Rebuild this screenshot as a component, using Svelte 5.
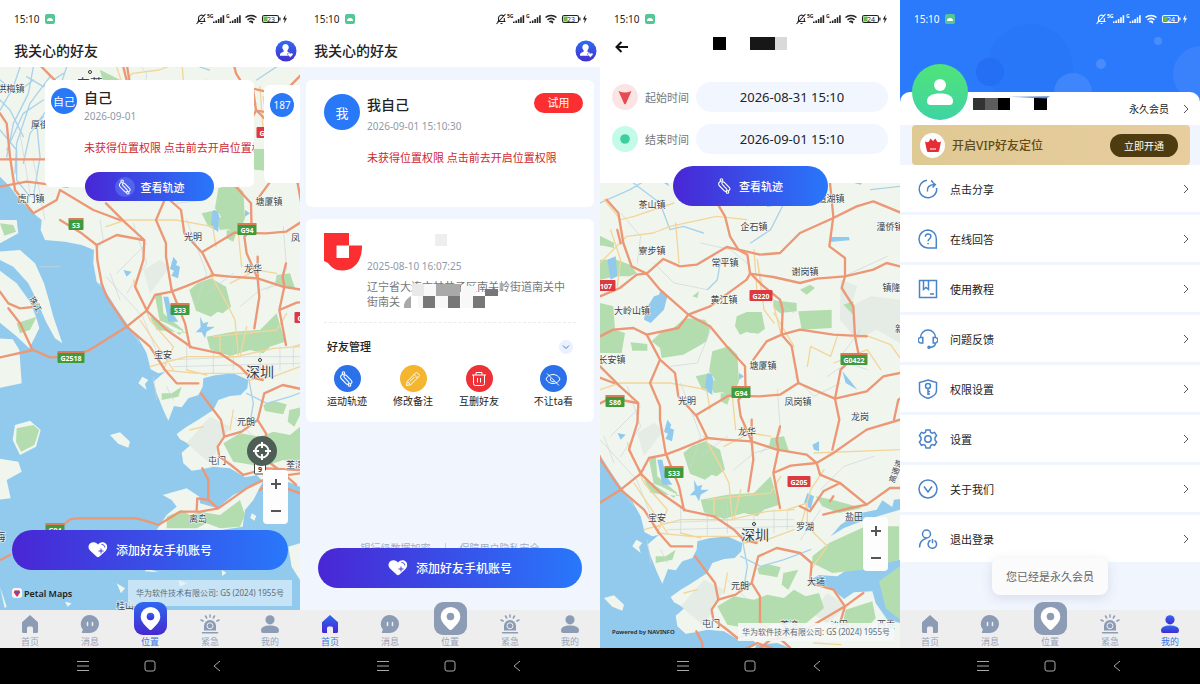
<script lang="ts">
  type Label = { t: string; x: number; y: number; size?: number; rotate?: number };
  type Badge = { t: string; x: number; y: number; kind: string };

  const notice = "未获得位置权限 点击前去开启位置权限";

  let startTime = $state("2026-08-31 15:10");
  let endTime = $state("2026-09-01 15:10");

  const tabs = [
    { id: "home", name: "首页" },
    { id: "chat", name: "消息" },
    { id: "pin", name: "位置" },
    { id: "alarm", name: "紧急" },
    { id: "me", name: "我的" },
  ];

  const menu = [
    { id: "share", name: "点击分享" },
    { id: "ask", name: "在线回答" },
    { id: "book", name: "使用教程" },
    { id: "headset", name: "问题反馈" },
    { id: "shield", name: "权限设置" },
    { id: "gear", name: "设置" },
    { id: "about", name: "关于我们" },
    { id: "logout", name: "退出登录" },
  ];

  const actions = [
    { id: "route", name: "运动轨迹" },
    { id: "pencil", name: "修改备注" },
    { id: "trash", name: "互删好友" },
    { id: "hide", name: "不让ta看" },
  ];

  const coastLabels: Label[] = [
    { t: "东莞", x: 90, y: 83, size: 13 },
    { t: "洪梅镇", x: 11, y: 88 },
    { t: "厚街", x: 40, y: 124 },
    { t: "虎门镇", x: 31, y: 198 },
    { t: "塘厦镇", x: 269, y: 201 },
    { t: "光明", x: 193, y: 236 },
    { t: "凤岗", x: 300, y: 237 },
    { t: "龙华", x: 253, y: 268 },
    { t: "珠江", x: 36, y: 304, size: 8, rotate: 60 },
    { t: "宝安", x: 163, y: 354 },
    { t: "深圳", x: 260, y: 371, size: 14 },
    { t: "元朗", x: 246, y: 421 },
    { t: "屯门", x: 217, y: 460 },
    { t: "荃湾", x: 295, y: 464 },
    { t: "离岛", x: 198, y: 518 },
    { t: "海", x: 0, y: 536, size: 11 },
    { t: "桂山", x: 125, y: 605 },
  ];

  const coastBadges: Badge[] = [
    { t: "G2", x: 264, y: 132, kind: "red" },
    { t: "S3", x: 76, y: 224, kind: "green" },
    { t: "G94", x: 247, y: 229, kind: "green" },
    { t: "S33", x: 180, y: 309, kind: "green" },
    { t: "G4", x: 302, y: 317, kind: "red" },
    { t: "G2518", x: 71, y: 357, kind: "green" },
    { t: "9", x: 260, y: 468, kind: "plain" },
    { t: "G94", x: 55, y: 529, kind: "green" },
  ];

  const inlandLabels: Label[] = [
    { t: "茶山镇", x: 52, y: 204 },
    { t: "道湖镇", x: 231, y: 198 },
    { t: "企石镇", x: 154, y: 226 },
    { t: "潼侨镇", x: 290, y: 226 },
    { t: "寮步镇", x: 52, y: 250 },
    { t: "常平镇", x: 125, y: 262 },
    { t: "谢岗镇", x: 205, y: 271 },
    { t: "镇隆镇", x: 296, y: 287 },
    { t: "黄江镇", x: 124, y: 299 },
    { t: "大岭山镇", x: 32, y: 310 },
    { t: "新圩", x: 304, y: 328 },
    { t: "长安镇", x: 12, y: 359 },
    { t: "塘厦镇", x: 163, y: 365 },
    { t: "光明", x: 87, y: 400 },
    { t: "凤岗镇", x: 198, y: 401 },
    { t: "龙岗", x: 260, y: 416 },
    { t: "龙华", x: 147, y: 431 },
    { t: "高通道", x: 295, y: 471, size: 8, rotate: -70 },
    { t: "宝安", x: 57, y: 517 },
    { t: "盐田", x: 254, y: 516 },
    { t: "罗湖", x: 205, y: 526 },
    { t: "深圳", x: 155, y: 534, size: 14 },
    { t: "大埔", x: 216, y: 581 },
    { t: "元朗", x: 140, y: 585 },
    { t: "屯门", x: 111, y: 623 },
    { t: "荃湾", x: 189, y: 624 },
    { t: "沙田", x: 239, y: 624 },
    { t: "西贡", x: 286, y: 624 },
  ];

  const inlandBadges: Badge[] = [
    { t: "107", x: 6, y: 285, kind: "red" },
    { t: "G220", x: 161, y: 295, kind: "red" },
    { t: "G0422", x: 254, y: 359, kind: "green" },
    { t: "G94", x: 141, y: 392, kind: "green" },
    { t: "S86", x: 15, y: 401, kind: "green" },
    { t: "S33", x: 74, y: 472, kind: "green" },
    { t: "G205", x: 199, y: 481, kind: "red" },
  ];
</script>

{#snippet statusBar(level: string)}
  <div class="status">
    <span class="clock">15:10</span>
    <svg class="app-dot" viewBox="0 0 10 10" width="10" height="10" aria-hidden="true">
      <rect width="10" height="10" rx="2" fill="#55c795" />
      <path d="M2 7a3 3 0 0 1 6 0z" fill="#fff" />
    </svg>
    <svg class="signals" viewBox="0 0 94 12" width="94" height="12" aria-hidden="true">
      <g fill="none" stroke="currentColor" stroke-width="1.1">
        <path d="M2.5 8.5h8M3.5 8.5V5a3 3 0 0 1 5.5-1.5M9.3 5v3.5M5.5 10.5h2M1.5 11L10.500 1" />
        <path d="M50.5 4.5a8.5 8.5 0 0 1 11 0M52.5 6.8a5.5 5.5 0 0 1 7 0M54.3 9a3 3 0 0 1 3.5 0" stroke-width="1.5" />
        <rect x="67.5" y="2.500" width="16" height="7" rx="1.8" />
      </g>
      <g fill="currentColor">
        <path d="M18 8.5h1.600v1.5H18zM20.400 7.5H22V10h-1.600zM22.800 6h1.600v4h-1.600zM25.200 4.200h1.600V10h-1.600zM27.600 2.200h1.600V10h-1.600z" />
        <path d="M34.500 8.500h1.600v1.500h-1.600zM36.900 7.500h1.600V10h-1.600zM39.300 6h1.600v4h-1.600zM41.700 4.200h1.600V10h-1.600zM44.100 2.200h1.600V10h-1.600z" />
        <path d="M56 9l1.300 1.800L58.600 9zM84.300 4.500h1.200v3h-1.200zM90.600 1.500L87.800 6.500h1.900l-.7 4 3-5.200h-1.900z" />
        <text x="12" y="4.500" font-size="5" font-weight="700">5G</text>
        <text x="31" y="4.500" font-size="5" font-weight="700">G</text>
      </g>
      <rect x="68.500" y="3.500" width="4" height="5" fill="#68bb49" />
      <text x="76" y="8.600" font-size="7" text-anchor="middle" fill="currentColor">{level}</text>
    </svg>
  </div>
{/snippet}

{#snippet titleBar()}
  <header class="title-bar">
    <h1>我关心的好友</h1>
    <button class="friend" aria-label="好友">
      <svg viewBox="0 0 22 22" width="22" height="22" aria-hidden="true">
        <circle cx="11" cy="11" r="10.5" fill="url(#badge-fill)" />
        <path d="M10.500 4a3.400 3.400 0 0 1 2.400 5.700c-.9.900-.7 1.900.3 2.300 1.600.6 2.800 1.100 2.900 2.600v1.200H5v-1.200c.1-1.500 1.300-2 2.900-2.600 1-.4 1.200-1.400.3-2.300A3.400 3.400 0 0 1 10.500 4z" fill="#fff" />
        <path d="M15.300 17.500l-2.600-2.600c-.9-1.500 1.300-2.900 2.600-1.300 1.300-1.600 3.500-.2 2.600 1.300z" fill="#fff" stroke="#3a45d8" stroke-width=".6" />
      </svg>
    </button>
  </header>
{/snippet}

{#snippet trackGlyph()}
  <g fill="none" stroke="currentColor" stroke-width="1.1" stroke-linecap="round">
    <circle cx="4.500" cy="2" r="1.300" />
    <circle cx="10.500" cy="14" r="1.300" />
    <path d="M3.600 3.200C1.200 4.800 1 6.400 2.600 8l4.700 4.800c1.500 1.500 3.700-.4 2.200-2L5.300 6.300c-1.300-1.500.5-3.300 2-1.900l4.900 5c1.300 1.400.9 2.500-.8 3.500" />
  </g>
{/snippet}

{#snippet tabIcon(id: string, fill: string)}
  {#if id === "home"}
    <svg viewBox="0 0 20 20" width="20" height="20"><path d="M10 1l8 7.300v9.200q0 1.500-1.500 1.500H13v-4.800q0-1.700-1.500-1.700h-3Q7 12.500 7 14.200V19H3.500Q2 19 2 17.500V8.300z" {fill} /></svg>
  {:else if id === "chat"}
    <svg viewBox="0 0 20 20" width="20" height="20">
      <path d="M10 1a9 9 0 1 1 0 18H2.500q-1 0-.6-1l1-2.300A9 9 0 0 1 10 1z" {fill} />
      <path d="M7.500 8.500v3M12.500 8.500v3" stroke="#eef0f3" stroke-width="1.500" stroke-linecap="round" />
    </svg>
  {:else if id === "pin"}
    <svg viewBox="0 0 33 33" width="33" height="33">
      <rect width="33" height="33" rx="9" {fill} />
      <path d="M16.500 5a9.800 9.800 0 0 1 9.800 9.800c0 5-5 9.500-8.500 12.700q-1.300 1.200-2.600 0C11.700 24.300 6.700 19.800 6.700 14.800A9.800 9.800 0 0 1 16.500 5z" fill="#fff" />
      <circle cx="16.500" cy="14.500" r="3.800" {fill} />
    </svg>
  {:else if id === "alarm"}
    <svg viewBox="0 0 20 20" width="20" height="20">
      <path d="M4 16.500V12a6 6 0 0 1 12 0v4.500z" {fill} />
      <circle cx="10" cy="11.800" r="3" fill="none" stroke="#eee" stroke-width="1" />
      <path d="M2.500 18.700h15M10 1v2M5.500 2l1.200 2M14.500 2l-1.200 2M1 6l2.200 1M19 6l-2.200 1" stroke={fill} stroke-width="1.500" stroke-linecap="round" />
    </svg>
  {:else}
    <svg viewBox="0 0 20 20" width="20" height="20">
      <circle cx="10" cy="5.800" r="4.600" {fill} />
      <path d="M1 16.500c0-3.200 3.500-5 9-5s9 1.800 9 5q0 2.500-2 2.500H3q-2 0-2-2.500z" {fill} />
    </svg>
  {/if}
{/snippet}

{#snippet bottomBars(active: string)}
  {#if active}
    <nav class="tabs">
      {#each tabs as tab}
        <button class="tab" class:active={tab.id === active} class:raised={tab.id === "pin"}>
          {@render tabIcon(tab.id, tab.id === active ? "url(#tab-fill)" : "#8d9cb5")}
          <span>{tab.name}</span>
        </button>
      {/each}
    </nav>
  {/if}
  <div class="system">
    <button aria-label="菜单"><svg viewBox="0 0 12 12" width="12" height="12"><path d="M0 1.500h12M0 6h12M0 10.500h12" /></svg></button>
    <button aria-label="主屏幕"><svg viewBox="0 0 12 12" width="12" height="12"><rect x="1" y="1" width="10" height="10" rx="2" /></svg></button>
    <button aria-label="返回"><svg viewBox="0 0 12 12" width="12" height="12"><path d="M9 1L3 6l6 5" /></svg></button>
  </div>
{/snippet}

{#snippet geography()}
  <!-- surveyed at three units to the pixel -->
  <g transform="scale(0.33333)">
    <rect x="-20" y="0" width="1300" height="1900" fill="#92caee" />
    <g fill="#f0f6ee">
      <path d="M-10 0H1280V1000L1200 1010 1195 1032 1165 1012 1148 1040 1090 1052 1040 1085 1010 1120 1050 1095 1110 1072 1218 1040 1218 1190 1110 1205 1075 1210 1030 1240 975 1236 950 1250 1010 1275 1050 1308 1080 1288 1135 1285 1145 1320 1180 1370 1218 1380 1280 1500 900 1500 900 1460 850 1440 790 1445 770 1425 735 1432 690 1405 640 1400 605 1408 575 1412 550 1390 545 1358 572 1335 540 1318 530 1302 560 1280 590 1262 640 1230 655 1200 690 1188 722 1185 742 1165 745 1140 700 1120 645 1126 610 1135 608 1160 595 1185 565 1195 545 1222 522 1218 505 1262 490 1230 470 1180 460 1145 495 1115 475 1120 452 1108 440 1060 415 1015 380 975 345 920 312 868 290 845 280 790 282 750 245 735 195 725 135 720 122 690 125 660 100 640 60 600 30 560-10 520z" />
      <path d="M-10 755L60 750 105 790 132 850 148 905 160 950 187 1030 165 1015 138 965 110 900 85 850 40 800-10 775zM-10 805L50 850 90 905 108 950 118 985 88 1045 45 1005-10 960zM-10 1015L38 1018 58 1050 65 1150-10 1165zM-10 660H50L55 700 0 730zM45 1275L90 1262 122 1290 108 1340 60 1365 38 1320zM-10 1375L55 1385 65 1415 20 1440 32 1495-10 1500z" />
      <path d="M488 1485L560 1465 598 1490 600 1510 652 1525 700 1485 788 1445 760 1500 735 1530 728 1580 600 1600 470 1590 500 1545 530 1520 515 1500zM330 1305l30-8 30 28-5 18-30-12zM415 1150l12-20 18 10-10 12 5 18zM440 1705l35 12-40-3zM350 1750l25 15-12 15zM865 1640l35-10v110l-25-40zM535 1740l25 10-20 10zM755 1540l14 8-6 14-12-8zM665 1710l14 8-12 10zM195 1805l20 5-12 10zM0 1760l20 60-6 4z" />
    </g>

    <g fill="#e2e9e2" opacity=".8">
      <path d="M1040 350l50 20-20 60 60-30 88 10v130l-70-40-60 30-50-60zM430 810l50-30 30 20-60 80zM560 1330l70-80 60 30-60 110zM1000 1290l60 40-60 50-50-30z" />
    </g>
    <g fill="#b3ddae">
      <path d="M318 290l50 0 40 15 20 25-20 10-40 0-50 10zM318 420l40 10 5 70 30 10-10 60-65 0zM300 210l60 30-50 10zM498 510l40-15 35-30 60 5 15 25-10 40-25 15-45 25-65 10-5-30-25-20zM655 565l50-15 25 25 5 80-20 50-35-20-20-40-15-20zM728 460l30-13 45 0 10 50-20 15-35-5-20 8-15-25zM913 445l100-5 0 55-90 5zM838 412l70 8 0 25-50 5-20-15zM918 380l30-15 15 10-25 20zM1048 425l30-10 0 40zM605 640l45-10 0 60-25-10zM410 538l50 5 0 20-45 0zM765 480l40-20zM595 400l20-15-5 20z" />
      <path d="M568 870l25-20 40-15 45 25 15 60-25 20-15-5-20 15-45-18zM620 1010l80-15 80-5 50-50 25 85-45 15-20 20-40-10-60 18-60-20zM465 890l20-10 5 60 60 50-10 15-60-40zM830 825l40-5 15 45-60-10zM965 1000l50 10 90 25-70 15-50-20zM955 1180l50-40 110-50 100 0 0 100-110 30-90 10-60-30zM670 1330l50-30 60 10 40-15 50 10 30-25 35 20 40-10 15 45-70 60-70-15-60 20-90-15zM790 1215l30-12 40 10-10 30-55-10zM868 1230l45-10-30 60-20-15zM1055 1340l80-25 10 50-40 45-60-20zM1155 1255l70-50 0 170-50-40zM560 1000l-60-30-50-20 20 40zM485 1180l30 0 30-20-10 30-50 10z" />
      <path d="M500 1550l45-20 25 15 30-10 60 10 60-45 15 45-15 35-60 5-40-15-30 15-90 0zM50 1285l50-10 18 15-15 45-40 20-15-30zM0 670l40 5 8 20-35 12zM50 970l60-20-20 40-30 10zM680 690l30 5-10 30-20-10zM640 650l60 5 10 30-50 5zM765 480l25-10 0 40-25 0zM300 210l60 30 0 15-45-10z" />
    </g>
    <g fill="#92caee">
      <path d="M480 400l15-5 5-15 20 20-10 40-40 40-20-10 5-30zM340 290l25-10 5 60-20 10zM638 635l20 10-5 50-20-20zM1010 222l55 0 2 10-60 5zM520 770l12 15-4 10 12 5-6 35-20-8 8-15-12-5zM600 950l10 20 15-5-5 15 25 0-25 15-5 20-10-18-18 0 15-15zM490 890l15 0 10 45 20 30-30 0zM940 990l20 10-10 40-20-20zM1080 60l40-25-20 30zM955 845l20-10 0 30-15-5zM735 630l15 10-15 10zM640 630l15 5 0 60-18-10zM370 810l25 5-15 15zM515 40l10 30-15-10zM1045 625l25 30 20 25-35-20z" />
    </g>

    <g class="river">
      <path d="M100 201l-15 80-45 90-20 100M200 201l-30 90-60 80 10 100-20 120M60 201l-20 60-40 70M150 230l-60 80-40 120-5 90M0 240l50 40 50-40M0 300l30 30 40 80M80 230l50 30 60-40M0 390l50 60 0 90 40 50M130 300l-60 40-50 110M318 120l90-40 50-30 100 5M418 60l80 60 30 80 40-10 60 20M820 130l60-10 50-60M870 120l-40 80-60 40M680 290l-10 60-30 30M130 350l-40 50-20 90M740 1180l60 30 70-20 80-30M745 1130l15 80-10 60M1130 80l90-10M300 850l50 80 70 100" />
    </g>
    <g class="lane">
      <path d="M380 150l60 70-10 80M480 300l60 60 100 20M620 240l90 20 60 50M650 500l-40 100-80 10M790 290l20 100 90 60M1050 340l130-60M700 100l60 30M900 640l60 60 80-40M400 670l40 120-60 90M560 660l60 160-30 90M700 820l-80 60M850 680l10 130-60 60M318 830l110 120 40 100M500 1080l240-10 160 0M520 1100l380-10M560 1030v80M640 1040v80M700 1030v80M780 1050v70M840 1040v70M880 1040v60M120 800l60 0M300 660l10 60-20 30M330 820l30 80M440 730l-90 90M720 920l60-50 70-20M100 480l35 180M60 400l30 180M980 980l70-70 90-30M1000 640l60-40 60 20M1100 500l-60 80M980 1040l-60 90M460 1130l10 70M500 1160l20 40M700 1250l60 60" />
    </g>
    <g class="street">
      <path d="M350 201l30 90-10 80M318 300l80-80 80-10 50-20 140-30 90 10M545 180l10 120M330 110l50 60 40-10 120-40M790 290l20 150 30 40M840 430l20 80M318 680l60-20 150 0 110 20 10 60M630 820l50 90 25 50 10 110M450 1100l110-30 150 0 110-25 80-5M520 1040l-30 70 100 10 150 0 60-20M400 840l50 120 70 80M640 1010l190-20 30-50M720 1070l20-90M660 1070v-60M920 1090l30-110 40-60M950 1100l50 50-50 70M960 870l260-10M560 1110l60 15M700 1230l-10 60M1020 600l100-40 40 60M880 1040l60-20 0 60M900 1100l-80 30-70 10M420 960l100 150M690 850l80-40 60 10M715 700l10 100M1110 515l80 30 28 40" />
      <path d="M780 260l10 140M840 450l60 100M940 610l10-60 60 30 20-60M960 1440l80 5M570 1290l40-10" />
    </g>

    <g class="highway">
      <path d="M338 110L373 150 388 240 413 310 458 332 498 380 583 455 648 490 698 550 753 610 755 690 733 710 740 760 773 835" />
      <path d="M318 400L378 375 428 335 458 332 508 288 558 310 608 305 698 252 733 260M125 201l40 40M370 201l10 40" />
      <path d="M663 110L693 160 708 220 733 260 760 275 768 330 803 365 858 410 866 440 863 515 893 550 913 660 958 680 1023 707 1036 770 1015 860" />
      <path d="M733 260L798 275 858 270 918 210 1018 165 1088 130 1138 115 1218 148M1008 60L1018 160 1006 250 1053 285 1053 340 1043 375 1078 430 1083 520 1093 570 1040 620 1023 707" />
      <path d="M768 332L838 342 918 360 968 347 1053 340 1138 320 1178 300 1218 310M583 455L648 430 758 350 768 332M0 560L80 545 200 560 318 520 358 500 418 495 458 515 553 495 583 455" />
      <path d="M458 515L498 590 468 660 498 730 498 770 515 870M498 590L543 630 553 700 608 760 640 825M778 590L818 535 863 515 918 500 1018 515 1118 520M318 610L378 670 433 720 430 780 405 860 440 930" />
      <path d="M608 755L703 698 798 700 858 695 913 660M1023 707L1118 685 1168 640 1218 630M1200 770L1213 710 1230 700" />
      <path d="M440 932L380 980 265 1052 210 1070 150 1072 100 1050 0 1072M440 932L465 885 515 875 555 860 640 825 690 830 773 835 848 860 938 875 968 900" />
      <path d="M515 870L555 970 570 1042M290 735L292 780 305 850 320 890 380 980 450 1040 495 1110 530 1150 595 1150M440 932L500 990 575 1042 660 1060 720 1100 748 1130 788 1140" />
      <path d="M773 770L773 835 778 890 763 985M858 790L848 830 853 860 838 930 858 1035M838 930L890 908 968 900 1018 870 1118 800 1218 770" />
      <path d="M968 900L978 935 1038 960 1118 1025 1188 975 1218 975M1038 960L988 985 948 1045 918 1030M988 1055L1068 1035 1118 1025M603 1180L663 1260 673 1310 653 1340 658 1370 693 1395 730 1425 800 1405 900 1410" />
      <path d="M673 1310L725 1295 773 1260 793 1180 848 1155 918 1170 953 1200 948 1260 1018 1280 1053 1330 968 1380 900 1420 830 1430 780 1470M773 1260L798 1300 798 1380 838 1410 888 1454M1108 1290L1053 1330 1038 1380" />
      <path d="M190 1575L210 1558 230 1555 410 1555 445 1565 475 1575 540 1535 600 1535 655 1525 740 1465 790 1440 900 1480M607 1405L625 1440 625 1500 655 1525M590 1530L592 1495 625 1500M0 1680L30 1665" />
      <path d="M180 660L245 700 290 735 350 705 430 720M0 340L20 370 30 470 45 570 100 640 170 600 180 570 280 630 360 660M0 478H150M0 875L25 910 60 925 110 920M25 925L60 970 95 1045M1018 1000l-10 15" />
    </g>
  </g>
{/snippet}

{#snippet markers(labels: Label[], badges: Badge[])}
  {#each labels as l}
    <text class="place" x={l.x} y={l.y} font-size={l.size ?? 9} transform={l.rotate ? `rotate(${l.rotate} ${l.x} ${l.y})` : undefined}>{l.t}</text>
  {/each}
  {#each badges as b}
    {@const w = b.t.length * 4 + 7}
    <g class="shield {b.kind}">
      <rect x={b.x - w / 2} y={b.y - 5} width={w} height="11" rx="1" />
      {#if b.kind === "green"}
        <path d="M{b.x - w / 2} {b.y - 5}h{w}" stroke="#d97c57" stroke-width="2" />
      {/if}
      <text x={b.x} y={b.y + 1}>{b.t}</text>
    </g>
  {/each}
{/snippet}

{#snippet zoomControl()}
  <div class="zoom">
    <button aria-label="放大"><svg viewBox="0 0 12 12" width="12" height="12"><path d="M1 6h10M6 1v10" /></svg></button>
    <button aria-label="缩小"><svg viewBox="0 0 12 12" width="12" height="12"><path d="M1 6h10" /></svg></button>
  </div>
{/snippet}

{#snippet addFriend()}
  <button class="pill add">
    <svg viewBox="0 0 20 18" width="20" height="18" aria-hidden="true">
      <path d="M8.500 15.500L2 9.500C-1 6 .8 1.500 5 1.200 7.500 1 9 2.200 10 3.500 11 2 13 .8 15.500 1.300 19.500 2.300 20.300 7 17.500 10l-6 5.500q-1.500 1.300-3 0z" fill="#fff" />
      <path d="M13 7.500v5M10.500 10h5M13.500 3.500c2 0 3.300 1 3.300 3" fill="none" stroke="#4540dc" stroke-width="1" />
    </svg>
    添加好友手机账号
  </button>
{/snippet}

{#snippet chevron()}
  <svg class="chevron" viewBox="0 0 6 10" width="6" height="10" aria-hidden="true"><path d="M1 1l4 4-4 4" /></svg>
{/snippet}

{#snippet menuIcon(id: string)}
  <svg class="menu-icon" viewBox="0 0 20 20" width="20" height="20" aria-hidden="true">
    {#if id === "share"}
      <path d="M9 1.300A8.800 8.800 0 1 0 18.700 9M13 1.800a8 8 0 0 1 2 1M9.500 12.500c-.8-4 1.500-6.700 7-7M14 3l3.300 2.500-2.800 3" />
    {:else if id === "ask"}
      <path d="M10 1a9 9 0 1 0 0 18h8.300V10A8.600 8.600 0 0 0 10 1zM7.300 7.800c0-3.700 5.700-3.600 5.600-.2 0 2.200-2.800 2.100-2.800 4.700M10.100 14v1.200" />
    {:else if id === "book"}
      <path d="M1.500 1.500h17v17h-17zM5.500 1.500v9l2.500-2 2.500 2v-9M12 15h4" />
    {:else if id === "headset"}
      <path d="M2.500 9V8.500a7.500 7.500 0 0 1 15 0V9M2.500 8.500h2.300v5.500H3.500a2.500 2.500 0 0 1-1-5.500zM17.500 8.500h-2.300v5.500h1.300a2.500 2.500 0 0 0 1-5.500zM17.500 13.800c0 3-2.500 4.500-6 4.500" />
      <circle cx="11" cy="18.300" r="1" />
    {:else if id === "shield"}
      <path d="M10 1l8.500 2.500v8c0 4-4 6.500-8.500 8-4.500-1.500-8.500-4-8.500-8v-8zM10 9.500v6.500M10 12.500h2M10 15h2" />
      <circle cx="10" cy="7" r="2.500" />
    {:else if id === "gear"}
      <path d="M8 1h4l.7 2.400 1.600.8 2.300-.8 2 3.200-1.600 1.900v2.500l1.600 2-2 3.300-2.400-.7-1.500.8L12 19H8l-.7-2.600-1.500-.8-2.400.7-2-3.300 1.600-2V8.500L1.400 6.600l2-3.200 2.300.8 1.600-.8z" />
      <circle cx="10" cy="10" r="3.200" />
    {:else if id === "about"}
      <circle cx="10" cy="10" r="9" />
      <path d="M6 7.500l4 5.500 4-5.500" />
    {:else}
      <circle cx="8.500" cy="5" r="4" />
      <path d="M1.500 18.500c0-5 2.500-8 7-9.200M12.500 11.300a4.200 4.200 0 1 0 4 .2M14.500 10v4.200" />
    {/if}
  </svg>
{/snippet}

<svg class="defs" width="0" height="0" aria-hidden="true">
  <defs>
    <linearGradient id="tab-fill" x1="0" y1="0" x2="0" y2="1">
      <stop offset="0" stop-color="#2f68f0" />
      <stop offset="1" stop-color="#4529cf" />
    </linearGradient>
    <linearGradient id="badge-fill" x1="0" y1="0" x2="0" y2="1">
      <stop offset="0" stop-color="#2e6cf3" />
      <stop offset="1" stop-color="#4430cf" />
    </linearGradient>
  </defs>
</svg>

<main class="board">
  <section class="phone">
    {@render statusBar("23")}
    {@render titleBar()}
    <div class="map">
      <svg class="canvas" viewBox="0 67 300 543" preserveAspectRatio="xMidYMid slice" aria-hidden="true">
        {@render geography()}
        <circle class="city" cx="90" cy="72" r="1.500" />
        <circle class="city" cx="260" cy="360" r="1.500" />
        {@render markers(coastLabels, coastBadges)}
      </svg>
      <div class="carousel">
        <article class="friend-card">
          <span class="avatar small">自己</span>
          <div class="who">
            <h2>自己</h2>
            <time>2026-09-01</time>
            <p class="warn">{notice}</p>
          </div>
          <button class="pill track">
            <svg class="halo" viewBox="-3 -2 21 20" width="20" height="20" aria-hidden="true">{@render trackGlyph()}</svg>
            查看轨迹
          </button>
        </article>
        <article class="friend-card next"><span class="avatar tiny">187</span></article>
      </div>
      <div class="map-tools">
        <button class="locate" aria-label="定位">
          <svg viewBox="0 0 20 20" width="20" height="20"><circle cx="10" cy="10" r="6.500" /><path d="M10 1v6M10 13v6M1 10h6M13 10h6" /></svg>
        </button>
        {@render zoomControl()}
      </div>
      {@render addFriend()}
      <footer class="credits">
        <span class="petal">
          <svg viewBox="0 0 10 10" width="10" height="10" aria-hidden="true"><rect width="10" height="10" rx="3" fill="#f5f7fb" /><path d="M5 9L1.800 4.500Q2 1.500 5 2.500 8 1.500 8.200 4.500z" fill="#d8324c" /><circle cx="5" cy="4.500" r="1.200" fill="#3e5fd0" /></svg>
          Petal Maps
        </span>
        <small>华为软件技术有限公司: GS (2024) 1955号</small>
      </footer>
    </div>
    {@render bottomBars("pin")}
  </section>

  <section class="phone">
    {@render statusBar("23")}
    {@render titleBar()}
    <div class="feed">
      <article class="card self">
        <span class="avatar">我</span>
        <div class="who">
          <h2>我自己</h2>
          <time>2026-09-01 15:10:30</time>
          <p class="warn">{notice}</p>
        </div>
        <button class="trial">试用</button>
      </article>
      <article class="card">
        <div class="person">
          <svg viewBox="0 0 38 38" width="38" height="38" aria-hidden="true">
            <path d="M0 0h25v12.500h13C38 29 30 37.500 18 37.500 11 37.500 7 34 4 30L0 28z" fill="#fb2e31" />
            <path d="M12.500 12.500H25V25H12.500z" fill="#fff" />
          </svg>
          <div class="who">
            <span class="hidden-name"></span>
            <time>2025-08-10 16:07:25</time>
            <p class="address">
              辽宁省大连市甘井子区南关岭街道南关中街南关
              <svg class="mosaic" viewBox="0 0 100 26" width="100" height="26" aria-hidden="true">
                <path d="M10 1h24v12H10zM59 3h15v10H59zM16 13h5v12h-5zM33 13h14v12H33zM59 13h13v12H59z" fill="#f8f8f8" />
                <path d="M10 1h12v12H10z" fill="#e9e9e9" />
                <path d="M34 1h24v12H34zM2 25Q1 18 9 13v12z" fill="#a9a9a9" />
                <path d="M21 13h12v12H21zM46 13h12v12H46zM71 13h12v12H71zM83 6h13v7H83z" fill="#777" />
              </svg>
            </p>
          </div>
        </div>
        <hr />
        <div class="manage">
          <h3>好友管理</h3>
          <button class="fold" aria-label="收起"><svg viewBox="0 0 8 6" width="8" height="6"><path d="M1 1.500l3 3 3-3" /></svg></button>
        </div>
        <div class="actions">
          {#each actions as action}
            <button class="action">
              <span class="disc {action.id}">
                <svg viewBox="0 0 16 16" width="16" height="16" aria-hidden="true">
                  {#if action.id === "route"}
                    {@render trackGlyph()}
                  {:else if action.id === "pencil"}
                    <path d="M1.500 14.500l.8-4.200 8.200-8.300q1-.8 2 0l1.500 1.500q.8 1 0 2l-8.300 8.200zM9 3.500l3.500 3.500M2.500 10.500l3 3M5 10.500L9.500 6" />
                  {:else if action.id === "trash"}
                    <path d="M1 4h14M5 4V1.500h6V4M2.500 4v8.500q0 2 2 2h7q2 0 2-2V4M6.500 7v4.500M9.500 7v4.500" />
                  {:else}
                    <path d="M1 8c2.500-6 11.500-6 14 0-2.500 6-11.500 6-14 0zM2 2.500l12 12M5.500 7.500a2.600 2.600 0 0 0 4 2.800" />
                  {/if}
                </svg>
              </span>
              {action.name}
            </button>
          {/each}
        </div>
      </article>
      <p class="promise"><span>银行级数据加密</span><i></i><span>保障用户隐私安全</span></p>
      {@render addFriend()}
    </div>
    {@render bottomBars("home")}
  </section>

  <section class="phone">
    {@render statusBar("24")}
    <header class="track-head">
      <button class="back" aria-label="返回"><svg viewBox="0 0 14 12" width="14" height="12"><path d="M13 6H1.500M6.500 1l-5 5 5 5" /></svg></button>
      <svg class="masked" viewBox="0 0 74 13" width="74" height="13" aria-hidden="true">
        <path d="M0 0h13v13H0z" />
        <path d="M37 0h25v13H37z" fill="#171717" />
        <path d="M62 0h12v13H62z" fill="#d9d9d9" />
      </svg>
    </header>
    <form class="range">
      <svg viewBox="0 0 26 26" width="26" height="26" aria-hidden="true"><circle cx="13" cy="13" r="13" fill="#fde4e4" /><path d="M6.500 7q6.500 3 13 0L14 19.500q-1 1.500-2 0z" fill="#e64b50" /></svg>
      <label for="start">起始时间</label>
      <input id="start" type="text" bind:value={startTime} />
      <svg viewBox="0 0 26 26" width="26" height="26" aria-hidden="true"><circle cx="13" cy="13" r="13" fill="#c4fbe8" /><circle cx="13" cy="13" r="4.800" fill="#40cf9c" /></svg>
      <label for="end">结束时间</label>
      <input id="end" type="text" bind:value={endTime} />
    </form>
    <div class="map inland">
      <svg class="canvas" viewBox="0 183 300 465" preserveAspectRatio="xMidYMid slice" aria-hidden="true">
        <g transform="translate(-106 163)">{@render geography()}</g>
        <circle class="city" cx="154" cy="524" r="1.500" />
        {@render markers(inlandLabels, inlandBadges)}
      </svg>
      <button class="pill track wide">
        <svg viewBox="0 0 15 16" width="15" height="16" aria-hidden="true">{@render trackGlyph()}</svg>
        查看轨迹
      </button>
      <div class="map-tools">{@render zoomControl()}</div>
      <footer class="credits">
        <span class="powered">Powered by NAVINFO</span>
        <small>华为软件技术有限公司: GS (2024) 1955号</small>
      </footer>
    </div>
    {@render bottomBars("")}
  </section>

  <section class="phone profile">
    <div class="hero">
      {@render statusBar("24")}
      <svg class="bubbles" viewBox="0 0 300 104" preserveAspectRatio="xMaxYMin slice" aria-hidden="true">
        <circle cx="130" cy="67" r="43" fill="#2977f9" />
        <circle cx="90" cy="72" r="14" fill="#246ff3" />
        <circle cx="173" cy="92" r="19" fill="#3f85fb" />
        <circle cx="201" cy="64" r="5" fill="#4a8cfc" />
        <circle cx="258" cy="41" r="4" fill="#4a8cfc" />
        <circle cx="301" cy="74" r="28" fill="#3a82fb" />
      </svg>
    </div>
    <div class="sheet">
      <span class="portrait">
        <svg viewBox="0 0 56 56" width="56" height="56" aria-hidden="true"><circle cx="28" cy="21" r="6" fill="#fff" /><path d="M15 37c0-5 5-7.500 13-7.500S41 32 41 37q0 4-3.500 4h-19q-3.500 0-3.500-4z" fill="#fff" /></svg>
      </span>
      <svg class="masked" viewBox="0 0 78 15" width="78" height="15" aria-hidden="true">
        <path d="M0 2h12v12H0z" fill="#333" /><path d="M12 2h13v12H12z" fill="#5d5d5d" />
        <path d="M25 2h12v12H25zM61 2h13v12H61z" />
        <path d="M37 .8L77 .3 73 2.500z" fill="#5b86cf" />
      </svg>
      <a class="member" href="#member">永久会员 {@render chevron()}</a>
    </div>
    <div class="vip">
      <span class="crown"><svg viewBox="0 0 16 14" width="16" height="14" aria-hidden="true"><path d="M0 3.500q2.500 1.500 4 0L5.500.500 8 3l2.500-2.500L12 3.500q1.500 1.500 4 0l-1.800 9q-.3 1.500-1.500 1.500H3.300q-1.200 0-1.500-1.500z" fill="#e62d33" /><path d="M5 11h6" stroke="#fff" /></svg></span>
      <strong>开启VIP好友定位</strong>
      <button>立即开通</button>
    </div>
    <ul class="menu">
      {#each menu as item}
        <li><a href="#{item.id}">{@render menuIcon(item.id)}<span>{item.name}</span>{@render chevron()}</a></li>
      {/each}
    </ul>
    <div class="rest"><div class="toast" role="status">您已经是永久会员</div></div>
    {@render bottomBars("me")}
  </section>
</main>

<style>
  :global(body) {
    margin: 0;
    background: #fff;
    font-family: "Noto Sans", "Noto Sans CJK SC", sans-serif;
    color: #222;
  }
  h1, h2, h3, p, ul, hr {
    margin: 0;
    padding: 0;
  }
  button, input {
    font: inherit;
    color: inherit;
    border: 0;
    padding: 0;
    background: none;
  }
  button {
    cursor: pointer;
  }
  a {
    color: inherit;
    text-decoration: none;
  }
  svg {
    flex: none;
    display: block;
  }
  .defs {
    position: absolute;
  }
  .board {
    display: grid;
    grid-template-columns: repeat(4, 1fr);
    min-height: 100vh;
  }
  .phone {
    display: flex;
    flex-direction: column;
    min-width: 0;
    overflow: hidden;
  }

  /* status and title */
  .status {
    display: flex;
    align-items: center;
    height: 38px;
    padding: 0 11px 0 14px;
  }
  .clock {
    font-size: 10px;
    margin-right: 5px;
  }
  .signals {
    margin-left: auto;
  }
  .title-bar {
    display: flex;
    align-items: center;
    justify-content: space-between;
    height: 25px;
    padding: 0 3px 4px 14px;
  }
  h1 {
    font-size: 14px;
    line-height: 20px;
    font-weight: 500;
  }
  h2 {
    font-size: 14px;
    line-height: 20px;
    font-weight: 500;
  }
  time {
    display: block;
    font-size: 10px;
    line-height: 16px;
    color: #8f9aa8;
  }
  .warn {
    font-size: 11px;
    line-height: 16px;
    color: #cf2730;
    white-space: nowrap;
    overflow: hidden;
  }

  /* map */
  .map {
    position: relative;
    flex: 1;
    display: flex;
    flex-direction: column;
  }
  .canvas {
    position: absolute;
    inset: 0;
    width: 100%;
    height: 100%;
  }
  .map > :not(.canvas) {
    position: relative;
  }
  .river, .lane, .street, .highway {
    fill: none;
    stroke-linejoin: round;
    stroke-linecap: round;
  }
  .river {
    stroke: #a9d2ea;
    stroke-width: 4;
  }
  .lane {
    stroke: #cdd3da;
    stroke-width: 2;
  }
  .street {
    stroke: #f3d59b;
    stroke-width: 4;
  }
  .highway {
    stroke: #ec9775;
    stroke-width: 7;
  }
  .place {
    fill: #39424c;
    stroke: #f8faf7;
    stroke-width: 1;
    paint-order: stroke;
    text-anchor: middle;
    dominant-baseline: central;
  }
  .city {
    fill: #fff;
    stroke: #333;
  }
  .shield text {
    font-size: 7px;
    font-weight: 700;
    fill: #fff;
    text-anchor: middle;
    dominant-baseline: central;
  }
  .shield.green rect {
    fill: #3f9a3c;
  }
  .shield.red rect {
    fill: #db3a41;
  }
  .shield.plain rect {
    fill: #fff;
    stroke: #444;
  }
  .shield.plain text {
    fill: #333;
  }
  .carousel {
    display: flex;
    align-items: center;
    gap: 10px;
    padding: 13px 0 0 15%;
  }
  .friend-card {
    position: relative;
    display: flex;
    gap: 7px;
    flex: none;
    box-sizing: border-box;
    width: 82%;
    height: 107px;
    padding: 8px 0 0 6px;
    border-radius: 6px;
    background: #fff;
  }
  .friend-card.next {
    height: 98px;
  }
  .avatar {
    display: grid;
    place-items: center;
    flex: none;
    width: 36px;
    height: 36px;
    border-radius: 50%;
    background: #2878f8;
    color: #fff;
    font-size: 13px;
  }
  .avatar.small {
    width: 26px;
    height: 26px;
    font-size: 11px;
  }
  .avatar.tiny {
    width: 24px;
    height: 24px;
    font-size: 10px;
  }
  .who {
    min-width: 0;
  }
  .friend-card .warn {
    margin-top: 16px;
  }
  .pill {
    display: flex;
    align-items: center;
    justify-content: center;
    gap: 8px;
    border-radius: 20px;
    background: linear-gradient(90deg, #4926d4, #2878fb);
    color: #fff;
  }
  .track {
    position: absolute;
    left: 40px;
    bottom: -14px;
    width: 129px;
    height: 29px;
    font-size: 11px;
    font-weight: 500;
    gap: 6px;
  }
  .halo {
    border-radius: 50%;
    background: rgba(110, 150, 255, 0.4);
  }
  .map-tools {
    display: flex;
    flex-direction: column;
    align-items: flex-end;
    gap: 4px;
    margin: auto 12px 6px 0;
  }
  .locate {
    display: grid;
    place-items: center;
    width: 30px;
    height: 30px;
    margin-right: 11px;
    border-radius: 50%;
    background: #4f5d57;
  }
  .locate svg {
    fill: none;
    stroke: #fff;
    stroke-width: 2;
  }
  .zoom {
    display: flex;
    flex-direction: column;
    border-radius: 4px;
    background: #fdfdfd;
  }
  .zoom button {
    display: grid;
    place-items: center;
    width: 25px;
    height: 27px;
  }
  .zoom svg {
    fill: none;
    stroke: #555;
    stroke-width: 2;
  }
  .add {
    height: 40px;
    margin: 0 12px;
    font-size: 12px;
    font-weight: 500;
  }
  .credits {
    display: flex;
    align-items: center;
    justify-content: space-between;
    margin: 10px 8px 4px 12px;
  }
  .credits small {
    padding: 0 8px;
    font-size: 8px;
    line-height: 26px;
    color: #5f6c76;
    background: rgba(222, 240, 250, 0.7);
    white-space: nowrap;
  }
  .petal {
    display: flex;
    align-items: center;
    gap: 2px;
    font-size: 9px;
    font-weight: 600;
    white-space: nowrap;
  }
  .inland .credits {
    margin: 46px 6px 7px 12px;
  }
  .inland .credits small {
    padding: 0 4px;
    line-height: 18px;
    background: rgba(245, 248, 246, 0.9);
  }
  .powered {
    font-size: 6px;
    font-weight: 600;
  }

  /* bottom bars */
  .tabs {
    position: relative;
    display: grid;
    grid-template-columns: repeat(5, 1fr);
    height: 38px;
    background: #eeeeef;
  }
  .tab {
    display: flex;
    flex-direction: column;
    align-items: center;
    justify-content: flex-end;
    font-size: 9px;
    line-height: 12px;
    color: #97a3b8;
    gap: 2px;
  }
  .tab.raised {
    margin-top: -12px;
    gap: 1px;
  }
  .tab.active {
    color: #3975e5;
  }
  .system {
    display: flex;
    align-items: center;
    justify-content: center;
    gap: 55px;
    height: 36px;
    background: #000;
  }
  .system svg {
    fill: none;
    stroke: #aaa;
    stroke-width: 1;
  }

  /* friend feed */
  .feed {
    flex: 1;
    display: flex;
    flex-direction: column;
    padding: 13px 6px 22px;
    background: #f1f5fe;
  }
  .card {
    padding: 14px 18px 13px;
    margin-bottom: 12px;
    border-radius: 6px;
    background: #fff;
  }
  .self {
    position: relative;
    display: flex;
    gap: 7px;
    min-height: 100px;
  }
  .self .who {
    padding-top: 1px;
  }
  .self time {
    margin-top: 3px;
  }
  .self .warn {
    margin-top: 16px;
  }
  .trial {
    position: absolute;
    top: 13px;
    right: 11px;
    width: 49px;
    height: 20px;
    border-radius: 10px;
    background: #fb2e31;
    color: #fff;
    font-size: 11px;
    line-height: 20px;
  }
  .person {
    display: flex;
    gap: 5px;
  }
  .hidden-name {
    display: block;
    width: 12px;
    height: 12px;
    margin: 1px 0 12px 68px;
    background: #eee;
  }
  .address {
    position: relative;
    margin-top: 5px;
    padding-right: 8px;
    font-size: 11px;
    line-height: 15px;
    color: #777;
  }
  .mosaic {
    position: absolute;
    top: 4px;
    left: 35px;
  }
  hr {
    border: 0;
    border-top: 1px dashed #ececf0;
    margin: 13px 0 16px;
  }
  .manage {
    display: flex;
    align-items: center;
    justify-content: space-between;
    padding: 0 3px;
  }
  h3 {
    font-size: 11px;
    line-height: 15px;
    font-weight: 500;
  }
  .fold {
    display: grid;
    place-items: center;
    width: 14px;
    height: 14px;
    border-radius: 50%;
    background: #e9f2fe;
  }
  .fold svg {
    fill: none;
    stroke: #4a7bc0;
  }
  .actions {
    display: flex;
    gap: 26px;
    margin: 11px 3px 0;
  }
  .action {
    display: flex;
    flex-direction: column;
    align-items: center;
    gap: 2px;
    font-size: 10px;
    line-height: 15px;
    white-space: nowrap;
  }
  .action:last-child {
    margin-left: auto;
  }
  .disc {
    display: grid;
    place-items: center;
    width: 27px;
    height: 27px;
    border-radius: 50%;
    background: #2b71ea;
    color: #fff;
  }
  .disc svg {
    fill: none;
    stroke: #fff;
    stroke-width: 1;
  }
  .disc.pencil {
    background: #f4b52f;
  }
  .disc.trash {
    background: #ee3136;
  }
  .promise {
    display: flex;
    justify-content: center;
    align-items: center;
    gap: 14px;
    margin: auto 0 -7px;
    font-size: 10px;
    line-height: 14px;
    color: #a3aec4;
  }
  .promise i {
    width: 1px;
    height: 10px;
    background: #c5cfe0;
  }
  .feed .add {
    position: relative;
  }

  /* track screen */
  .track-head {
    display: grid;
    grid-template-columns: 1fr auto 1fr;
    align-items: center;
    height: 18px;
    padding: 0 15px;
  }
  .back {
    justify-self: start;
  }
  .back svg {
    fill: none;
    stroke: #111;
    stroke-width: 2;
  }
  .track-head .masked {
    margin-top: -8px;
  }
  .range {
    display: grid;
    grid-template-columns: 26px auto 1fr;
    align-items: center;
    gap: 12px 7px;
    padding: 26px 12px 29px;
    font-size: 11px;
    color: #74777c;
  }
  .range input {
    min-width: 0;
    height: 30px;
    border-radius: 15px;
    background: #f2f6fe;
    color: #20242c;
    font-size: 13px;
    text-align: center;
  }
  .track.wide {
    width: 155px;
    height: 40px;
    gap: 7px;
  }
  .inland .track.wide {
    position: relative;
    left: auto;
    bottom: auto;
    align-self: center;
    margin-top: -17px;
  }

  /* profile */
  .profile {
    background: #f1f5fe;
  }
  .hero {
    position: relative;
    height: 104px;
    color: #fff;
    background: #2b7afb;
  }
  .hero .status {
    position: relative;
    z-index: 1;
  }
  .bubbles {
    position: absolute;
    inset: 0;
    width: 100%;
    height: 100%;
  }
  .sheet {
    position: relative;
    display: flex;
    align-items: center;
    gap: 5px;
    height: 33px;
    margin-top: -12px;
    padding: 0 11px 0 12px;
    border-radius: 10px 10px 0 0;
    background: #fff;
  }
  .portrait {
    align-self: flex-start;
    margin-top: -28px;
    border-radius: 50%;
    background: linear-gradient(#50e479, #3fd3a5);
  }
  .sheet .masked {
    margin-top: -10px;
  }
  .member {
    display: flex;
    align-items: center;
    gap: 14px;
    margin-left: auto;
    font-size: 10px;
  }
  .chevron {
    fill: none;
    stroke: #555;
    stroke-width: 1;
  }
  .vip {
    display: flex;
    align-items: center;
    height: 40px;
    margin: 0 10px 0 12px;
    border-radius: 4px;
    background: linear-gradient(90deg, #dfc993, #e8cd9f);
  }
  .crown {
    display: grid;
    place-items: center;
    width: 25px;
    height: 25px;
    margin: 0 7px 0 8px;
    border-radius: 50%;
    background: #fff;
  }
  .vip strong {
    font-size: 12px;
    font-weight: 500;
    color: #624b15;
  }
  .vip button {
    width: 68px;
    height: 23px;
    margin: 0 12px 0 auto;
    border-radius: 12px;
    background: #4f3b10;
    color: #fff;
    font-size: 10px;
  }
  .menu {
    display: flex;
    flex-direction: column;
    gap: 3px;
    list-style: none;
  }
  .menu a {
    display: flex;
    align-items: center;
    gap: 12px;
    height: 47px;
    padding: 0 11px 0 18px;
    background: #fff;
    font-size: 11px;
  }
  .menu .chevron {
    margin-left: auto;
  }
  .menu-icon {
    fill: none;
    stroke: #4b83c9;
    stroke-width: 1.5px;
  }
  .rest {
    position: relative;
    flex: 1;
  }
  .toast {
    position: absolute;
    top: -4px;
    left: 50%;
    transform: translateX(-50%);
    padding: 0 14px;
    border-radius: 8px;
    background: #fbfbfc;
    box-shadow: 0 3px 12px rgba(60, 80, 120, 0.15);
    font-size: 11px;
    line-height: 37px;
    color: #666;
    white-space: nowrap;
  }
</style>
